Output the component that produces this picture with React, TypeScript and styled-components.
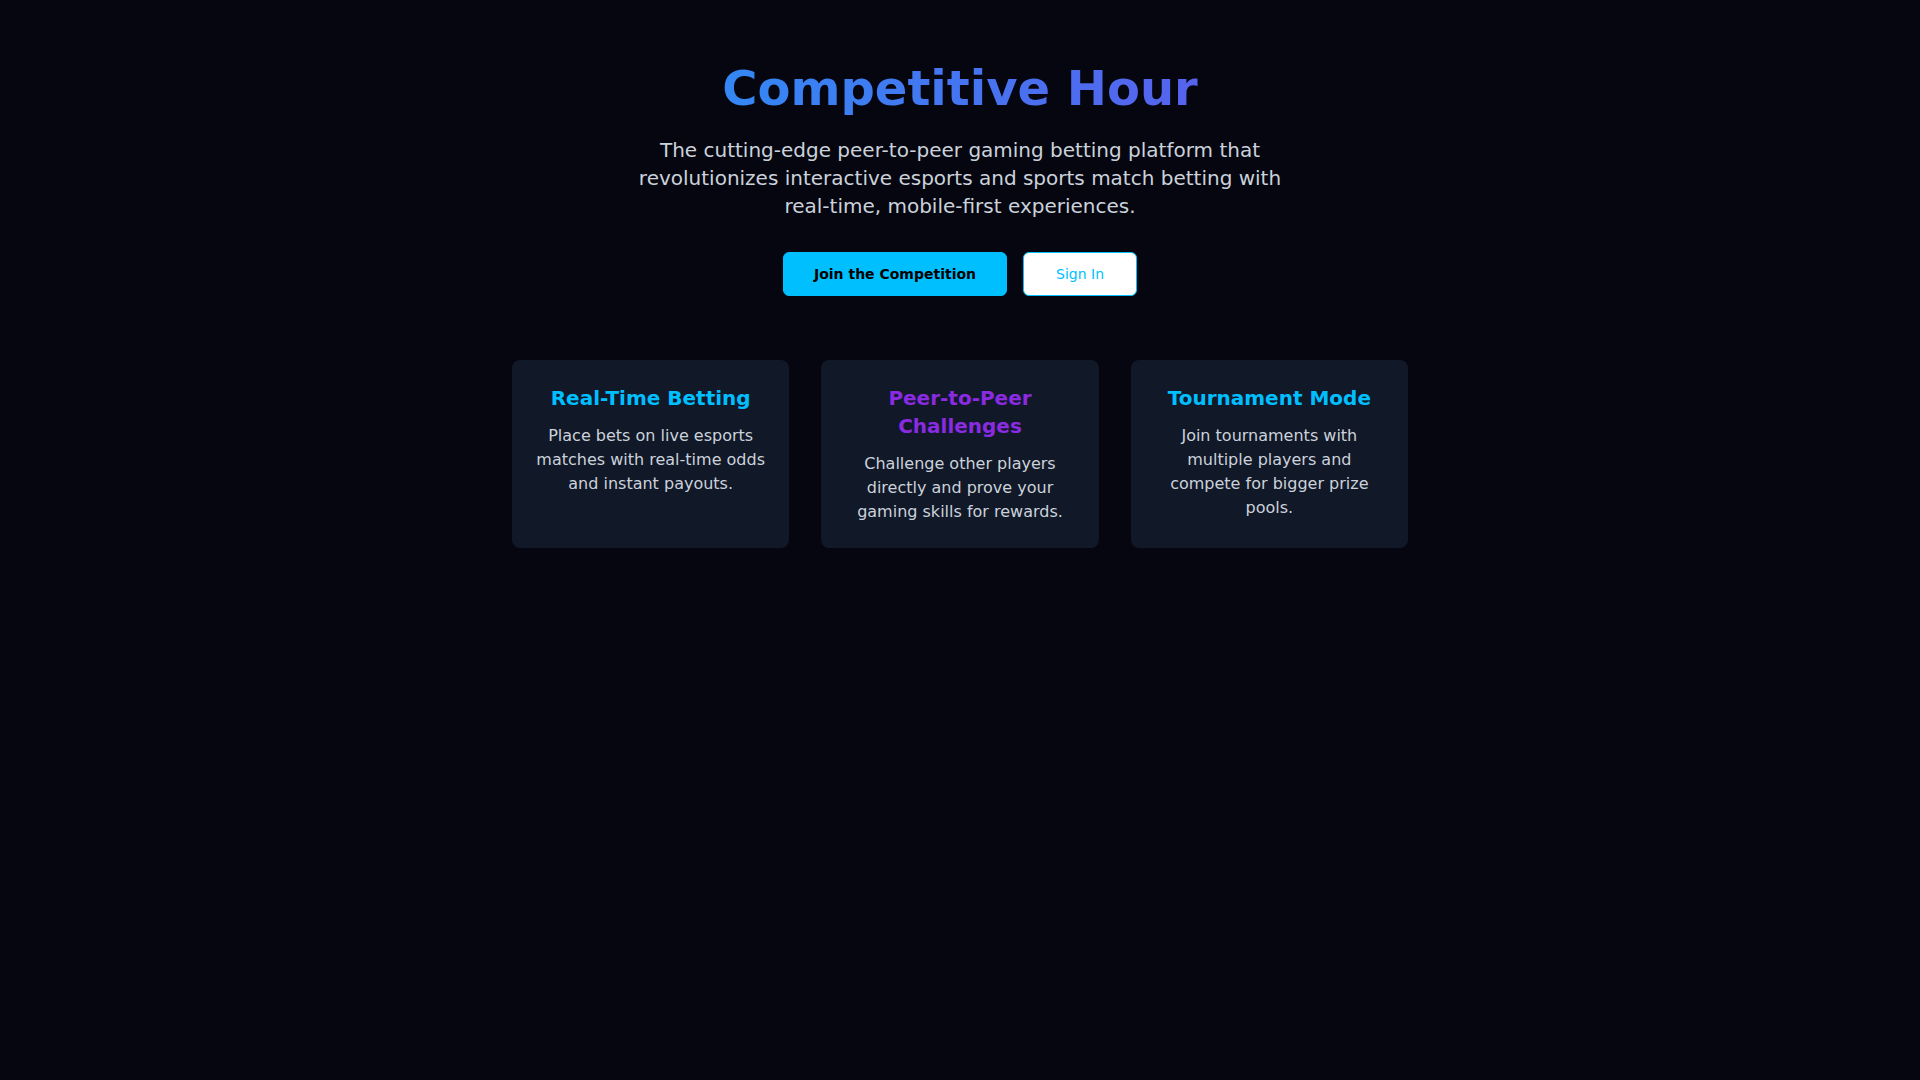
import React from 'react';
import styled, { createGlobalStyle } from 'styled-components';

const GlobalStyle = createGlobalStyle`
  * { box-sizing: border-box; }
  html, body {
    margin: 0;
    padding: 0;
    background: #05060f;
    font-family: "DejaVu Sans", Verdana, sans-serif;
  }
`;

const Page = styled.main`
  min-height: 100vh;
  background: #05060f;
  display: flex;
  flex-direction: column;
  align-items: center;
  padding: 56px 24px;
`;

const Title = styled.h1`
  width: 100vw;
  margin: 0 0 16px;
  text-align: center;
  font-size: 48px;
  line-height: 64px;
  font-weight: 700;
  background: linear-gradient(90deg, #00bfff, #8a2be2);
  background-attachment: fixed;
  -webkit-background-clip: text;
  background-clip: text;
  color: transparent;
`;

const Subtitle = styled.p`
  max-width: 672px;
  margin: 0 0 32px;
  text-align: center;
  font-size: 20px;
  line-height: 28px;
  color: #cbd2dc;
`;

const Actions = styled.div`
  display: flex;
  gap: 16px;
  margin-bottom: 64px;
`;

const Button = styled.button<{ $primary?: boolean }>`
  font-family: inherit;
  font-size: 14px;
  line-height: 20px;
  padding: ${({ $primary }) => ($primary ? '11px 30px' : '11px 32px')};
  border-radius: 6px;
  cursor: pointer;
  border: 1px solid #00bfff;
  background: ${({ $primary }) => ($primary ? '#00bfff' : '#ffffff')};
  color: ${({ $primary }) => ($primary ? '#000000' : '#00bfff')};
  font-weight: ${({ $primary }) => ($primary ? 700 : 400)};
`;

const Features = styled.section`
  width: 896px;
  display: grid;
  grid-template-columns: repeat(3, 1fr);
  gap: 32px;
`;

const Card = styled.div`
  background: #111827;
  border-radius: 8px;
  padding: 24px;
  text-align: center;
`;

const CardTitle = styled.h3<{ $color: string }>`
  margin: 0 0 12px;
  font-size: 20px;
  line-height: 28px;
  font-weight: 700;
  color: ${({ $color }) => $color};
`;

const CardText = styled.p`
  margin: 0;
  font-size: 16px;
  line-height: 24px;
  color: #cbd2dc;
`;

const features = [
  {
    title: 'Real-Time Betting',
    color: '#00bfff',
    text: 'Place bets on live esports matches with real-time odds and instant payouts.',
  },
  {
    title: 'Peer-to-Peer Challenges',
    color: '#8a2be2',
    text: 'Challenge other players directly and prove your gaming skills for rewards.',
  },
  {
    title: 'Tournament Mode',
    color: '#00bfff',
    text: 'Join tournaments with multiple players and compete for bigger prize pools.',
  },
];

const App: React.FC = () => (
  <>
    <GlobalStyle />
    <Page>
      <Title>Competitive Hour</Title>
      <Subtitle>
        The cutting-edge peer-to-peer gaming betting platform that revolutionizes interactive
        esports and sports match betting with real-time, mobile-first experiences.
      </Subtitle>
      <Actions>
        <Button $primary>Join the Competition</Button>
        <Button>Sign In</Button>
      </Actions>
      <Features>
        {features.map((f) => (
          <Card key={f.title}>
            <CardTitle $color={f.color}>{f.title}</CardTitle>
            <CardText>{f.text}</CardText>
          </Card>
        ))}
      </Features>
    </Page>
  </>
);

export default App;
